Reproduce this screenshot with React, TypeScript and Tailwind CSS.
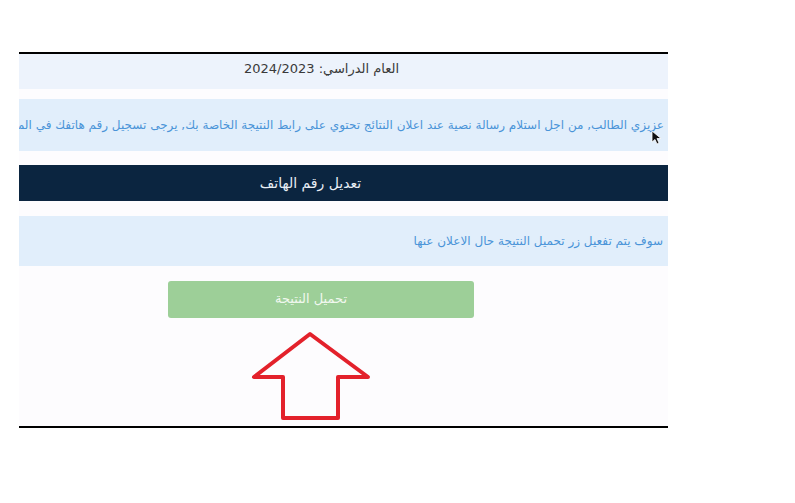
export default function App() {
  const font = { fontFamily: '"DejaVu Sans", "Noto Sans", sans-serif' }
  return (
    <div className="w-full h-[503px] bg-white relative overflow-hidden" style={font}>
      <div className="ml-[19px] mt-[52px] w-[649px] h-[376px] border-t-2 border-b-2 border-black bg-[#fdfcfe] flex flex-col" dir="rtl">
        <div className="h-[35px] bg-[#edf3fc] flex justify-center pt-[5px] pr-[44px] text-[13px] text-[#3a3a3a]">
          العام الدراسي: 2024/2023
        </div>
        <div className="mt-[10px] h-[52px] bg-[#e1eefb] flex items-center overflow-hidden pr-[4px]">
          <span className="whitespace-nowrap text-[12px] text-[#4a94d8]">
            عزيزي الطالب, من اجل استلام رسالة نصية عند اعلان النتائج تحتوي على رابط النتيجة الخاصة بك, يرجى تسجيل رقم هاتفك في المنصة
          </span>
        </div>
        <div className="mt-[14px] h-[36px] bg-[#0b2540] flex items-center justify-center pr-[66px] text-[14px] text-[#e8eef5]">
          تعديل رقم الهاتف
        </div>
        <div className="mt-[15px] h-[50px] bg-[#e1eefb] flex items-center pr-[5px] text-[12px] text-[#4a94d8]">
          سوف يتم تفعيل زر تحميل النتيجة حال الاعلان عنها
        </div>
        <div className="mt-[15px] flex" dir="ltr">
          <button className="ml-[149px] w-[306px] h-[37px] pb-[2px] pr-[20px] rounded-[3px] bg-[#9dcf98] text-[13px] text-[#f1f8ef]" dir="rtl">
            تحميل النتيجة
          </button>
        </div>
        <div className="mt-[13px] flex" dir="ltr">
          <svg className="ml-[232px]" width="120" height="92" viewBox="0 0 120 92">
            <path
              d="M59 3 L3 46 L32 46 L32 87 L87 87 L87 46 L117 46 Z"
              fill="none"
              stroke="#e3212b"
              strokeWidth="4"
              strokeLinejoin="round"
            />
          </svg>
        </div>
      </div>
      <svg className="absolute left-[651px] top-[130px]" width="12" height="16" viewBox="0 0 12 16">
        <path d="M1 1 L1 12 L4 9.5 L6 14 L8 13 L6 8.5 L10 8.5 Z" fill="#111" stroke="#fff" strokeWidth="0.8" />
      </svg>
    </div>
  )
}
